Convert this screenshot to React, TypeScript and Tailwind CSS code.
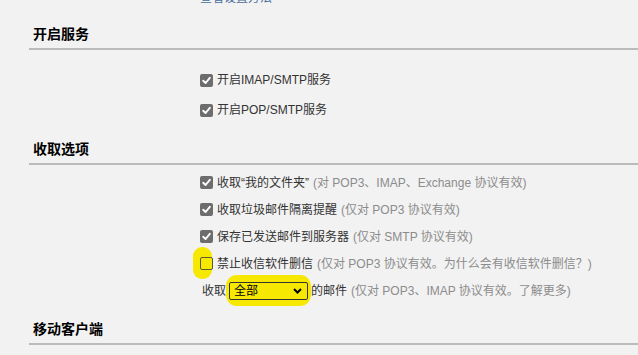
const font = { fontFamily: '"Liberation Sans", "Noto Sans CJK SC", sans-serif' };

function Box({ checked }: { checked: boolean }) {
  if (!checked) {
    return <span className="relative block h-[13px] w-[13px] rounded-[2px] border border-[#5a5a3a]" />;
  }
  return (
    <span className="flex h-[13px] w-[13px] items-center justify-center rounded-[2px] bg-[#6d6d6d]">
      <svg width="9" height="9" viewBox="0 0 9 9">
        <path d="M1.2 4.8 L3.6 7 L7.8 1.8" fill="none" stroke="#fff" strokeWidth="1.9" strokeLinecap="round" strokeLinejoin="round" />
      </svg>
    </span>
  );
}

function Header({ title, mt }: { title: string; mt: string }) {
  return (
    <div className={`${mt} ml-[29px] flex h-[26px] items-center border-b-2 border-[#bbbbbb] pb-[4px] pl-[4px] text-[14px] font-bold text-black`}>
      {title}
    </div>
  );
}

function Option({ label, note, checked = true, h = "h-[27px]", mark = false }: { label: string; note: string; checked?: boolean; h?: string; mark?: boolean }) {
  return (
    <div className={`${h} flex items-center pl-[200px] text-[12px]`}>
      <span className="relative">
        {mark && <span className="absolute left-[-7px] top-[-10px] h-[32px] w-[19px] rounded-[9px] bg-[#f6e800]" />}
        <span className="relative">
          <Box checked={checked} />
        </span>
      </span>
      <span className="ml-[4px] text-[#333]">{label}</span>
      <span className="ml-[4px] text-[#8c8c8c]">{note}</span>
    </div>
  );
}

export default function App() {
  return (
    <div className="h-[355px] w-[638px] overflow-hidden bg-[#f2f2f2]" style={font}>
      <div className="h-[6px] overflow-hidden pl-[200px]">
        <div className="mt-[-9px] text-[12px] leading-[14px] text-[#4a6e9c]">查看设置方法</div>
      </div>

      <Header title="开启服务" mt="mt-[18px]" />
      <div className="mt-[15px]">
        <Option label="开启IMAP/SMTP服务" note="" h="h-[30px]" />
        <Option label="开启POP/SMTP服务" note="" h="h-[30px]" />
      </div>

      <Header title="收取选项" mt="mt-[14px]" />
      <div className="mt-[4px]">
        <Option label="收取“我的文件夹”" note="(对 POP3、IMAP、Exchange 协议有效)" />
        <Option label="收取垃圾邮件隔离提醒" note="(仅对 POP3 协议有效)" />
        <Option label="保存已发送邮件到服务器" note="(仅对 SMTP 协议有效)" />
        <Option label="禁止收信软件删信" note="(仅对 POP3 协议有效。为什么会有收信软件删信？)" checked={false} mark />
        <div className="flex h-[27px] items-center pl-[202px] text-[12px]">
          <span className="text-[#333]">收取</span>
          <span className="relative ml-[3px]">
            <span className="absolute left-[-3px] top-[-7px] h-[31px] w-[85px] rounded-[11px] bg-[#f6e800]" />
            <span className="relative flex h-[18px] w-[79px] items-center justify-between rounded-[2px] border border-[#333] bg-[#f6e800] pl-[4px] pr-[5px] text-black">
              全部
              <svg width="9" height="6" viewBox="0 0 9 6">
                <path d="M1 1 L4.5 4.5 L8 1" fill="none" stroke="#000" strokeWidth="2" />
              </svg>
            </span>
          </span>
          <span className="ml-[3px] text-[#333]">的邮件</span>
          <span className="ml-[4px] text-[#8c8c8c]">(仅对 POP3、IMAP 协议有效。了解更多)</span>
        </div>
      </div>

      <Header title="移动客户端" mt="mt-[15px]" />
    </div>
  );
}
